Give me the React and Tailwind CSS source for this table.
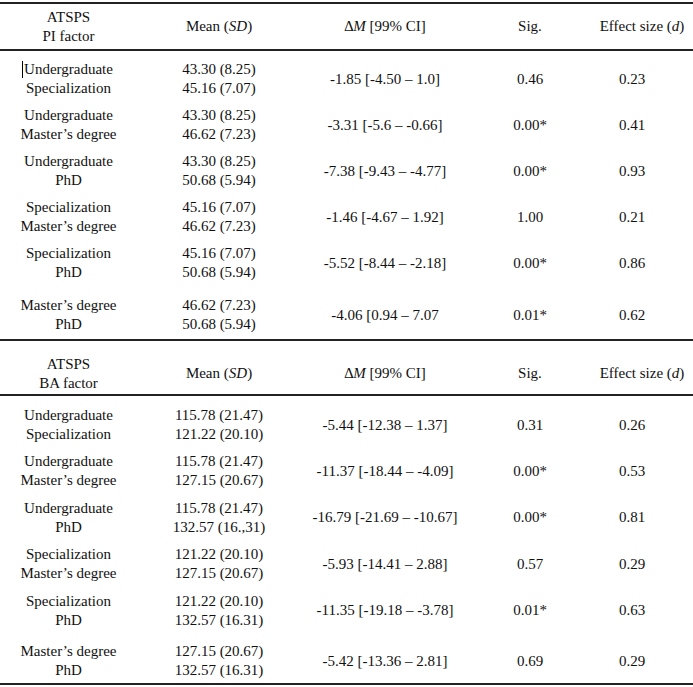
const PI_ROWS = [
  { a: "Undergraduate", b: "Specialization", m1: "43.30 (8.25)", m2: "45.16 (7.07)", dm: "-1.85 [-4.50 – 1.0]", sig: "0.46", d: "0.23", h: "h-[46px]" },
  { a: "Undergraduate", b: "Master’s degree", m1: "43.30 (8.25)", m2: "46.62 (7.23)", dm: "-3.31 [-5.6 – -0.66]", sig: "0.00*", d: "0.41", h: "h-[46px]" },
  { a: "Undergraduate", b: "PhD", m1: "43.30 (8.25)", m2: "50.68 (5.94)", dm: "-7.38 [-9.43 – -4.77]", sig: "0.00*", d: "0.93", h: "h-[46px]" },
  { a: "Specialization", b: "Master’s degree", m1: "45.16 (7.07)", m2: "46.62 (7.23)", dm: "-1.46 [-4.67 – 1.92]", sig: "1.00", d: "0.21", h: "h-[46px]" },
  { a: "Specialization", b: "PhD", m1: "45.16 (7.07)", m2: "50.68 (5.94)", dm: "-5.52 [-8.44 – -2.18]", sig: "0.00*", d: "0.86", h: "h-[46px]" },
  { a: "Master’s degree", b: "PhD", m1: "46.62 (7.23)", m2: "50.68 (5.94)", dm: "-4.06 [0.94 – 7.07", sig: "0.01*", d: "0.62", h: "h-[46px] mt-[6px]" },
];

const BA_ROWS = [
  { a: "Undergraduate", b: "Specialization", m1: "115.78 (21.47)", m2: "121.22 (20.10)", dm: "-5.44 [-12.38 – 1.37]", sig: "0.31", d: "0.26", h: "h-[46px]" },
  { a: "Undergraduate", b: "Master’s degree", m1: "115.78 (21.47)", m2: "127.15 (20.67)", dm: "-11.37 [-18.44 – -4.09]", sig: "0.00*", d: "0.53", h: "h-[46px]" },
  { a: "Undergraduate", b: "PhD", m1: "115.78 (21.47)", m2: "132.57 (16.,31)", dm: "-16.79 [-21.69 – -10.67]", sig: "0.00*", d: "0.81", h: "h-[47px]" },
  { a: "Specialization", b: "Master’s degree", m1: "121.22 (20.10)", m2: "127.15 (20.67)", dm: "-5.93 [-14.41 – 2.88]", sig: "0.57", d: "0.29", h: "h-[46px]" },
  { a: "Specialization", b: "PhD", m1: "121.22 (20.10)", m2: "132.57 (16.31)", dm: "-11.35 [-19.18 – -3.78]", sig: "0.01*", d: "0.63", h: "h-[47px]" },
  { a: "Master’s degree", b: "PhD", m1: "127.15 (20.67)", m2: "132.57 (16.31)", dm: "-5.42 [-13.36 – 2.81]", sig: "0.69", d: "0.29", h: "h-[46px] mt-[4px]" },
];

const GRID = "grid grid-cols-[137px_164px_168px_122px_102px] items-center text-center";

function Header({ factor, className }) {
  return (
    <div className={`${GRID} ${className}`}>
      <div>
        <div>ATSPS</div>
        <div>{factor}</div>
      </div>
      <div>
        Mean (<i>SD</i>)
      </div>
      <div>
        ∆<i>M</i> [99% CI]
      </div>
      <div>Sig.</div>
      <div>
        Effect size (<i>d</i>)
      </div>
    </div>
  );
}

function Row({ row, cursor }) {
  return (
    <div className={`${GRID} ${row.h}`}>
      <div>
        <div className="relative inline-block">
          {cursor && <span className="absolute left-[-2px] top-[1px] h-[17px] w-px bg-black" />}
          {row.a}
        </div>
        <div>{row.b}</div>
      </div>
      <div>
        <div>{row.m1}</div>
        <div>{row.m2}</div>
      </div>
      <div>{row.dm}</div>
      <div>{row.sig}</div>
      <div className="pr-5">{row.d}</div>
    </div>
  );
}

export default function App() {
  return (
    <div
      className="h-[687px] w-[693px] bg-white pt-[2px] text-[15px] leading-[19px] text-[#111]"
      style={{ fontFamily: '"Liberation Serif", "Times New Roman", serif' }}
    >
      <div className="border-t-2 border-[#222]">
        <Header factor="PI factor" className="h-[47px] border-b-2 border-[#222]" />
        <div className="h-[290px] border-b-2 border-[#222] pt-[5px]">
          {PI_ROWS.map((r, i) => (
            <Row key={i} row={r} cursor={i === 0} />
          ))}
        </div>
        <Header factor="BA factor" className="h-[55px] border-b-2 border-[#222] pt-[12px]" />
        <div className="h-[289px] border-b-2 border-[#222] pt-[6px]">
          {BA_ROWS.map((r, i) => (
            <Row key={i} row={r} />
          ))}
        </div>
      </div>
    </div>
  );
}
